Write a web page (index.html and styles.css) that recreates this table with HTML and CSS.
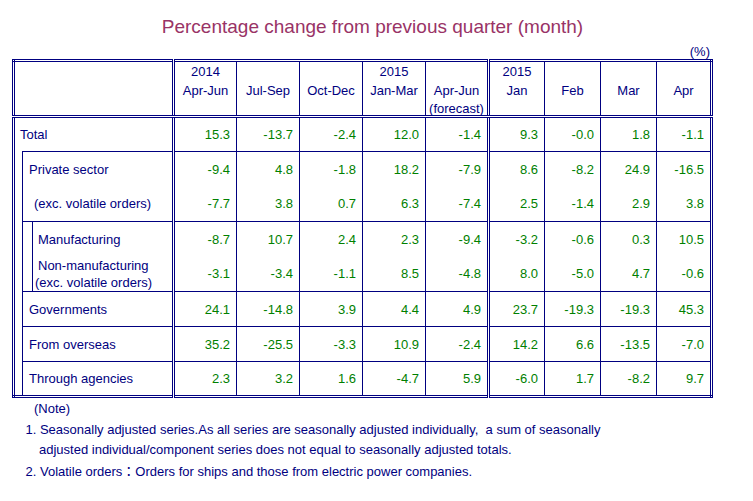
FILE: index.html
```html
<!DOCTYPE html>
<html lang="en">
<head>
<meta charset="utf-8">
<title>Percentage change from previous quarter (month)</title>
<link rel="stylesheet" href="styles.css">
</head>
<body>
<div class="page">
  <h1 class="title">Percentage change from previous quarter (month)</h1>
  <div class="unit">(%)</div>
  <table class="grid">
    <colgroup>
      <col class="c-in1"><col class="c-in2"><col class="c-label">
      <col class="c-q"><col class="c-q"><col class="c-q"><col class="c-q"><col class="c-q c-qend">
      <col class="c-m"><col class="c-m"><col class="c-m"><col class="c-mlast">
    </colgroup>
    <thead>
      <tr class="head">
        <th colspan="3"></th>
        <th><div class="h">2014<br>Apr-Jun</div></th>
        <th><div class="h"><br>Jul-Sep</div></th>
        <th><div class="h"><br>Oct-Dec</div></th>
        <th><div class="h">2015<br>Jan-Mar</div></th>
        <th><div class="h"><br>Apr-Jun<br>(forecast)</div></th>
        <th><div class="h">2015<br>Jan</div></th>
        <th><div class="h"><br>Feb</div></th>
        <th><div class="h"><br>Mar</div></th>
        <th><div class="h"><br>Apr</div></th>
      </tr>
    </thead>
    <tbody>
      <tr>
        <td colspan="3" class="lab lab-total">Total</td>
        <td class="num">15.3</td><td class="num">-13.7</td><td class="num">-2.4</td><td class="num">12.0</td><td class="num">-1.4</td>
        <td class="num">9.3</td><td class="num">-0.0</td><td class="num">1.8</td><td class="num">-1.1</td>
      </tr>
      <tr class="pair-top">
        <td rowspan="7" class="gap"></td>
        <td colspan="2" class="lab lab-sub">Private sector</td>
        <td class="num">-9.4</td><td class="num">4.8</td><td class="num">-1.8</td><td class="num">18.2</td><td class="num">-7.9</td>
        <td class="num">8.6</td><td class="num">-8.2</td><td class="num">24.9</td><td class="num">-16.5</td>
      </tr>
      <tr class="pair-bot">
        <td colspan="2" class="lab lab-exc">(exc. volatile orders)</td>
        <td class="num">-7.7</td><td class="num">3.8</td><td class="num">0.7</td><td class="num">6.3</td><td class="num">-7.4</td>
        <td class="num">2.5</td><td class="num">-1.4</td><td class="num">2.9</td><td class="num">3.8</td>
      </tr>
      <tr class="pair-top">
        <td rowspan="2" class="gap2"></td>
        <td class="lab lab-sub2">Manufacturing</td>
        <td class="num">-8.7</td><td class="num">10.7</td><td class="num">2.4</td><td class="num">2.3</td><td class="num">-9.4</td>
        <td class="num">-3.2</td><td class="num">-0.6</td><td class="num">0.3</td><td class="num">10.5</td>
      </tr>
      <tr class="pair-bot">
        <td class="lab lab-two"><span class="l1">Non-manufacturing</span><span class="l2">(exc. volatile orders)</span></td>
        <td class="num">-3.1</td><td class="num">-3.4</td><td class="num">-1.1</td><td class="num">8.5</td><td class="num">-4.8</td>
        <td class="num">8.0</td><td class="num">-5.0</td><td class="num">4.7</td><td class="num">-0.6</td>
      </tr>
      <tr>
        <td colspan="2" class="lab lab-sub">Governments</td>
        <td class="num">24.1</td><td class="num">-14.8</td><td class="num">3.9</td><td class="num">4.4</td><td class="num">4.9</td>
        <td class="num">23.7</td><td class="num">-19.3</td><td class="num">-19.3</td><td class="num">45.3</td>
      </tr>
      <tr>
        <td colspan="2" class="lab lab-sub">From overseas</td>
        <td class="num">35.2</td><td class="num">-25.5</td><td class="num">-3.3</td><td class="num">10.9</td><td class="num">-2.4</td>
        <td class="num">14.2</td><td class="num">6.6</td><td class="num">-13.5</td><td class="num">-7.0</td>
      </tr>
      <tr>
        <td colspan="2" class="lab lab-sub">Through agencies</td>
        <td class="num">2.3</td><td class="num">3.2</td><td class="num">1.6</td><td class="num">-4.7</td><td class="num">5.9</td>
        <td class="num">-6.0</td><td class="num">1.7</td><td class="num">-8.2</td><td class="num">9.7</td>
      </tr>
    </tbody>
  </table>
  <div class="notes">
    <div class="note-head">(Note)</div>
    <div class="note">1. Seasonally adjusted series.As all series are seasonally adjusted individually,&nbsp; a sum of seasonally<br>adjusted individual/component series does not equal to seasonally adjusted totals.</div>
    <div class="note">2. Volatile orders<span class="colon">：</span>Orders for ships and those from electric power companies.</div>
  </div>
</div>
</body>
</html>
```

FILE: styles.css
```css
html, body {
  margin: 0;
  padding: 0;
  background: #ffffff;
}

body {
  font-family: "Liberation Sans", Arial, "Noto Sans CJK JP", sans-serif;
  color: #000080;
}

.page {
  width: 753px;
}

.title {
  margin: 0;
  padding-top: 16px;
  width: 745px;
  text-align: center;
  font-size: 19px;
  line-height: 22px;
  font-weight: normal;
  color: #993366;
}

.unit {
  margin-top: 6px;
  height: 15px;
  line-height: 15px;
  font-size: 13px;
  width: 710px;
  text-align: right;
}

.grid {
  margin-left: 12px;
  width: 701px;
  table-layout: fixed;
  border-collapse: collapse;
  border: 3px double #000080;
  font-size: 13px;
}

.c-in1 { width: 9px; }
.c-in2 { width: 10px; }
.c-label { width: 141px; border-right: 3px double #000080; }
.c-q { width: 63px; }
.c-qend { border-right: 3px double #000080; }
.c-m { width: 56px; }
.c-mlast { width: 55px; }

.grid th,
.grid td {
  padding: 0;
  border: 1px solid #000080;
}

.head th {
  height: 53px;
  border-bottom: 3px double #000080;
  font-weight: normal;
  vertical-align: top;
  text-align: center;
  color: #000080;
}

.h {
  height: 53px;
  padding-top: 1px;
  box-sizing: border-box;
  line-height: 18.5px;
  white-space: nowrap;
}

.grid tbody tr {
  height: 35px;
}

.num {
  text-align: right;
  padding-right: 6px !important;
  color: #008000;
  vertical-align: middle;
}

.lab {
  text-align: left;
  vertical-align: middle;
  color: #000080;
  white-space: nowrap;
}

.lab-total {
  padding-left: 5px !important;
  border-bottom: none !important;
}

.lab-sub { padding-left: 6px !important; }
.lab-exc { padding-left: 11px !important; }
.lab-sub2 { padding-left: 5px !important; }

.lab-two {
  line-height: 17px;
}

.lab-two .l1 {
  display: block;
  padding-left: 5px;
}

.lab-two .l2 {
  display: block;
  padding-left: 2px;
}

.gap {
  border: none !important;
  border-right: 1px solid #000080 !important;
}

.gap2 {
  border: none !important;
  border-left: 1px solid #000080 !important;
  border-right: 1px solid #000080 !important;
}

.pair-top td { border-bottom: none; }
.pair-bot td { border-top: none; }
.pair-top .lab-sub2 { border-top: 1px solid #000080; }

.notes {
  padding-top: 1px;
  font-size: 13px;
  line-height: 20.7px;
  color: #000080;
}

.note-head {
  padding-left: 34px;
}

.note {
  padding-left: 39px;
  text-indent: -13.5px;
}

.colon {
  font-family: "Noto Sans CJK JP", sans-serif;
}
```
